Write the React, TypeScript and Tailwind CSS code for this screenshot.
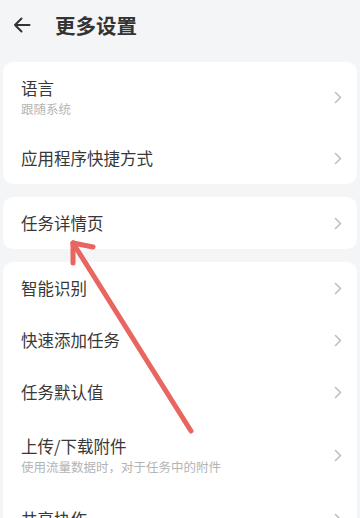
import React from 'react';

const font = { fontFamily: '"Noto Sans CJK SC", "Noto Sans", sans-serif' };

function Chevron() {
  return (
    <svg width="8" height="13" viewBox="0 0 8 13" fill="none" className="shrink-0">
      <path d="M1.5 1.5L6.5 6.5L1.5 11.5" stroke="#bdbdbd" strokeWidth="1.5" strokeLinecap="round" strokeLinejoin="round" />
    </svg>
  );
}

function Row({ title, sub, tall }: { title: string; sub?: string; tall?: number }) {
  return (
    <div
      className={`flex items-center justify-between pl-[18px] pr-[15px] ${sub ? (tall === 75 ? 'h-[75px]' : 'h-[70px]') : 'h-[52px]'}`}
    >
      <div className="flex flex-col">
        <span className="text-[16.5px] leading-[22px] text-[#383838]">{title}</span>
        {sub && <span className="mt-[1px] text-[12.5px] leading-[18px] text-[#b4b4b4]">{sub}</span>}
      </div>
      <Chevron />
    </div>
  );
}

export default function App() {
  return (
    <div className="relative h-[518px] w-[360px] overflow-hidden bg-[#f4f5f7]" style={font}>
      {/* header */}
      <div className="flex h-[50px] items-center pl-[13px]">
        <svg width="18" height="16" viewBox="0 0 18 16" fill="none">
          <path d="M16.5 8H2M8.5 1.5L2 8L8.5 14.5" stroke="#333" strokeWidth="2" strokeLinecap="round" strokeLinejoin="round" />
        </svg>
        <span className="ml-[24px] text-[20.5px] font-bold text-[#333333]">更多设置</span>
      </div>

      <div className="flex flex-col gap-[13px] px-[3px] pt-[12px]">
        <div className="rounded-[10px] bg-white">
          <Row title="语言" sub="跟随系统" />
          <Row title="应用程序快捷方式" />
        </div>
        <div className="rounded-[10px] bg-white">
          <Row title="任务详情页" />
        </div>
        <div className="rounded-[10px] bg-white">
          <Row title="智能识别" />
          <Row title="快速添加任务" />
          <Row title="任务默认值" />
          <Row title="上传/下载附件" sub="使用流量数据时，对于任务中的附件" tall={75} />
          <Row title="共享协作" />
        </div>
      </div>

      {/* annotation arrow */}
      <svg className="pointer-events-none absolute left-0 top-0" width="360" height="518" viewBox="0 0 360 518" fill="none">
        <g stroke="#e8665f" strokeWidth="5" strokeLinecap="round" strokeLinejoin="round">
          <path d="M191 431L73 243" />
          <path d="M73 243L73 263" />
          <path d="M73 243L93 247" />
        </g>
      </svg>
    </div>
  );
}
